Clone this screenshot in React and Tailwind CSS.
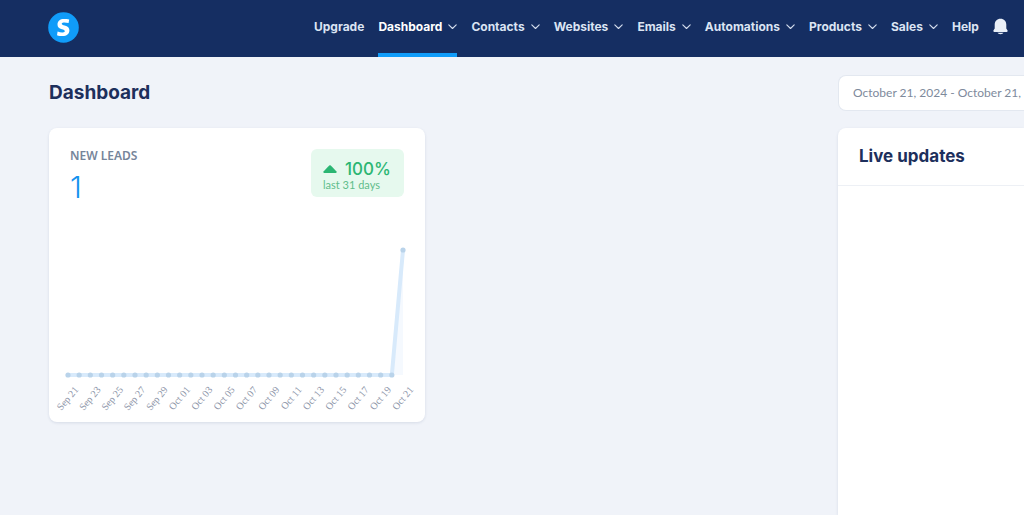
import React from "react";

const navItems = [
  { label: "Upgrade" },
  { label: "Dashboard", menu: true, active: true },
  { label: "Contacts", menu: true },
  { label: "Websites", menu: true },
  { label: "Emails", menu: true },
  { label: "Automations", menu: true },
  { label: "Products", menu: true },
  { label: "Sales", menu: true },
  { label: "Help" },
];

const days = [
  "Sep 21", "Sep 23", "Sep 25", "Sep 27", "Sep 29", "Oct 01", "Oct 03", "Oct 05",
  "Oct 07", "Oct 09", "Oct 11", "Oct 13", "Oct 15", "Oct 17", "Oct 19", "Oct 21",
];

const leads = Array.from({ length: 31 }, (_, i) => (i === 30 ? 1 : 0));
const px = (i) => 19 + (i * 335) / 30;
const py = (v) => 135 - v * 125;

function Chevron() {
  return (
    <svg className="h-[6px] w-[9px]" viewBox="0 0 9 6" fill="none" aria-hidden="true">
      <path d="M0.8 0.8l3.7 3.7L8.2 0.8" stroke="#d5deee" strokeWidth="1.1" strokeLinecap="round" strokeLinejoin="round" />
    </svg>
  );
}

function Header() {
  return (
    <header className="flex h-[57px] items-stretch justify-between bg-[#152e62] pr-4 pl-12">
      <a href="#home" aria-label="Home" className="flex items-center pb-[3px]">
        <svg className="size-[31px]" viewBox="0 0 31 31" aria-hidden="true">
          <circle cx="15.5" cy="15.5" r="15.3" fill="#109cf9" />
          <path
            d="M21.2 7.4L20.6 11.1C18.8 10.6 17 10.4 15.6 10.5C14.3 10.6 13.7 11.1 13.8 11.9C13.9 12.6 14.9 12.9 16.6 13.4C20 14.4 21.4 15.7 21.4 18.3C21.4 22 18.700 24.1 14.5 24.1C12.500 24.1 10.700 23.9 9 23.2L9.6 19.6C11.5 20.3 13.2 20.6 14.7 20.5C16.200 20.4 16.900 19.9 16.8 19C16.700 18.200 15.700 17.8 13.9 17.3C10.800 16.400 9.500 15 9.500 12.500C9.500 8.900 12 6.9 16 6.9C18 6.9 19.7 7 21.2 7.4Z"
            fill="#fff"
          />
        </svg>
      </a>
      <nav className="flex w-[694px] items-stretch justify-between font-['Inter',sans-serif] text-xs font-bold text-[#dbe4f3]">
        {navItems.map((item) => (
          <a
            key={item.label}
            href={"#" + item.label.toLowerCase()}
            className={
              "flex items-center gap-1.5 border-b-4 " +
              (item.active ? "border-[#109cf9] text-white" : "border-transparent")
            }
          >
            {item.label}
            {item.menu && <Chevron />}
          </a>
        ))}
        <button type="button" aria-label="Notifications" className="flex items-center pb-[5px]">
          <svg className="h-[17px] w-[15px]" viewBox="0 0 15 17" fill="#eaf0f8" aria-hidden="true">
            <path d="M7.5 0.7C4 0.7 1.7 3.1 1.7 6.6V10.5L0.4 12.6Q0 14 1.3 14H13.7Q15 14 14.6 12.6L13.3 10.5V6.6C13.3 3.1 11 0.7 7.5 0.7Z" />
            <path d="M4.5 14.8H10.5Q9.9 16.2 7.5 16.2T4.5 14.8Z" />
          </svg>
        </button>
      </nav>
    </header>
  );
}

function LeadsChart() {
  const points = leads.map((v, i) => px(i) + "," + py(v)).join(" ");
  return (
    <svg className="mt-[35px] block w-full" viewBox="0 0 376 182" role="img" aria-label="New leads per day">
      <polygon points="343,135 354,10 354,135" fill="#f5f9fe" />
      <polyline points={points} fill="none" stroke="#d8eafb" strokeWidth="4" strokeLinejoin="round" />
      {leads.map((v, i) => (
        <circle key={i} cx={px(i)} cy={py(v)} r="2.6" fill="#b9d3ea" />
      ))}
      {days.map((d, i) => (
        <text
          key={d}
          textAnchor="end"
          transform={"translate(" + (px(i * 2) + 11) + " 150) rotate(-50)"}
          className="fill-[#8b93a7] font-['Liberation_Serif',serif] text-[10px]"
        >
          {d}
        </text>
      ))}
    </svg>
  );
}

export default function App() {
  return (
    <div className="flex min-h-screen flex-col bg-[#f0f3f9] font-['Inter',sans-serif] text-[#1d2f5c]">
      <Header />
      <main className="flex flex-1 justify-between pt-[18px] pl-[49px]">
        <section className="w-[376px]">
          <h1 className="flex h-9 items-center text-[19px] font-bold">Dashboard</h1>
          <article className="mt-[17px] h-[294px] rounded-lg bg-white pt-[21px] shadow-[0_1px_3px_rgba(30,60,110,0.12)]">
            <div className="flex items-start justify-between px-[21px]">
              <div>
                <h2 className="font-['Noto_Sans',sans-serif] text-xs leading-[14px] font-semibold text-[#76859a]">
                  NEW LEADS
                </h2>
                <p className="mt-1.5 text-3xl leading-9 font-light text-[#1492ee]">1</p>
              </div>
              <div className="h-12 w-[93px] rounded-md bg-[#e6f9ee] pt-2.5 pl-3 text-[#2bb673]">
                <p className="flex items-center gap-2 text-[17px] leading-5 font-medium">
                  <svg className="h-[8px] w-[14px]" viewBox="0 0 14 8" fill="#2bb673" aria-hidden="true">
                    <path d="M6.2 0.6Q7 0 7.8 0.6L13.5 6.5Q14 8 12.8 8H1.2Q0 8 0.5 6.5Z" />
                  </svg>
                  100%
                </p>
                <p className="font-['Lato',sans-serif] text-[11px] leading-3 text-[#5fbd8b]">last 31 days</p>
              </div>
            </div>
            <LeadsChart />
          </article>
        </section>
        <aside className="flex w-[186px] flex-col">
          <button
            type="button"
            className="h-9 rounded-l-lg border border-r-0 border-[#e3e8f0] bg-white pl-3.5 text-left font-['Lato',sans-serif] text-xs whitespace-nowrap text-[#7e8a9c]"
          >
            October 21, 2024 - October 21,
          </button>
          <section className="mt-[17px] flex-1 rounded-tl-lg bg-white shadow-[0_1px_3px_rgba(30,60,110,0.12)]">
            <h2 className="border-b border-[#edf0f5] py-[15px] pl-[21px] text-[17px] leading-[27px] font-bold">
              Live updates
            </h2>
          </section>
        </aside>
      </main>
    </div>
  );
}
